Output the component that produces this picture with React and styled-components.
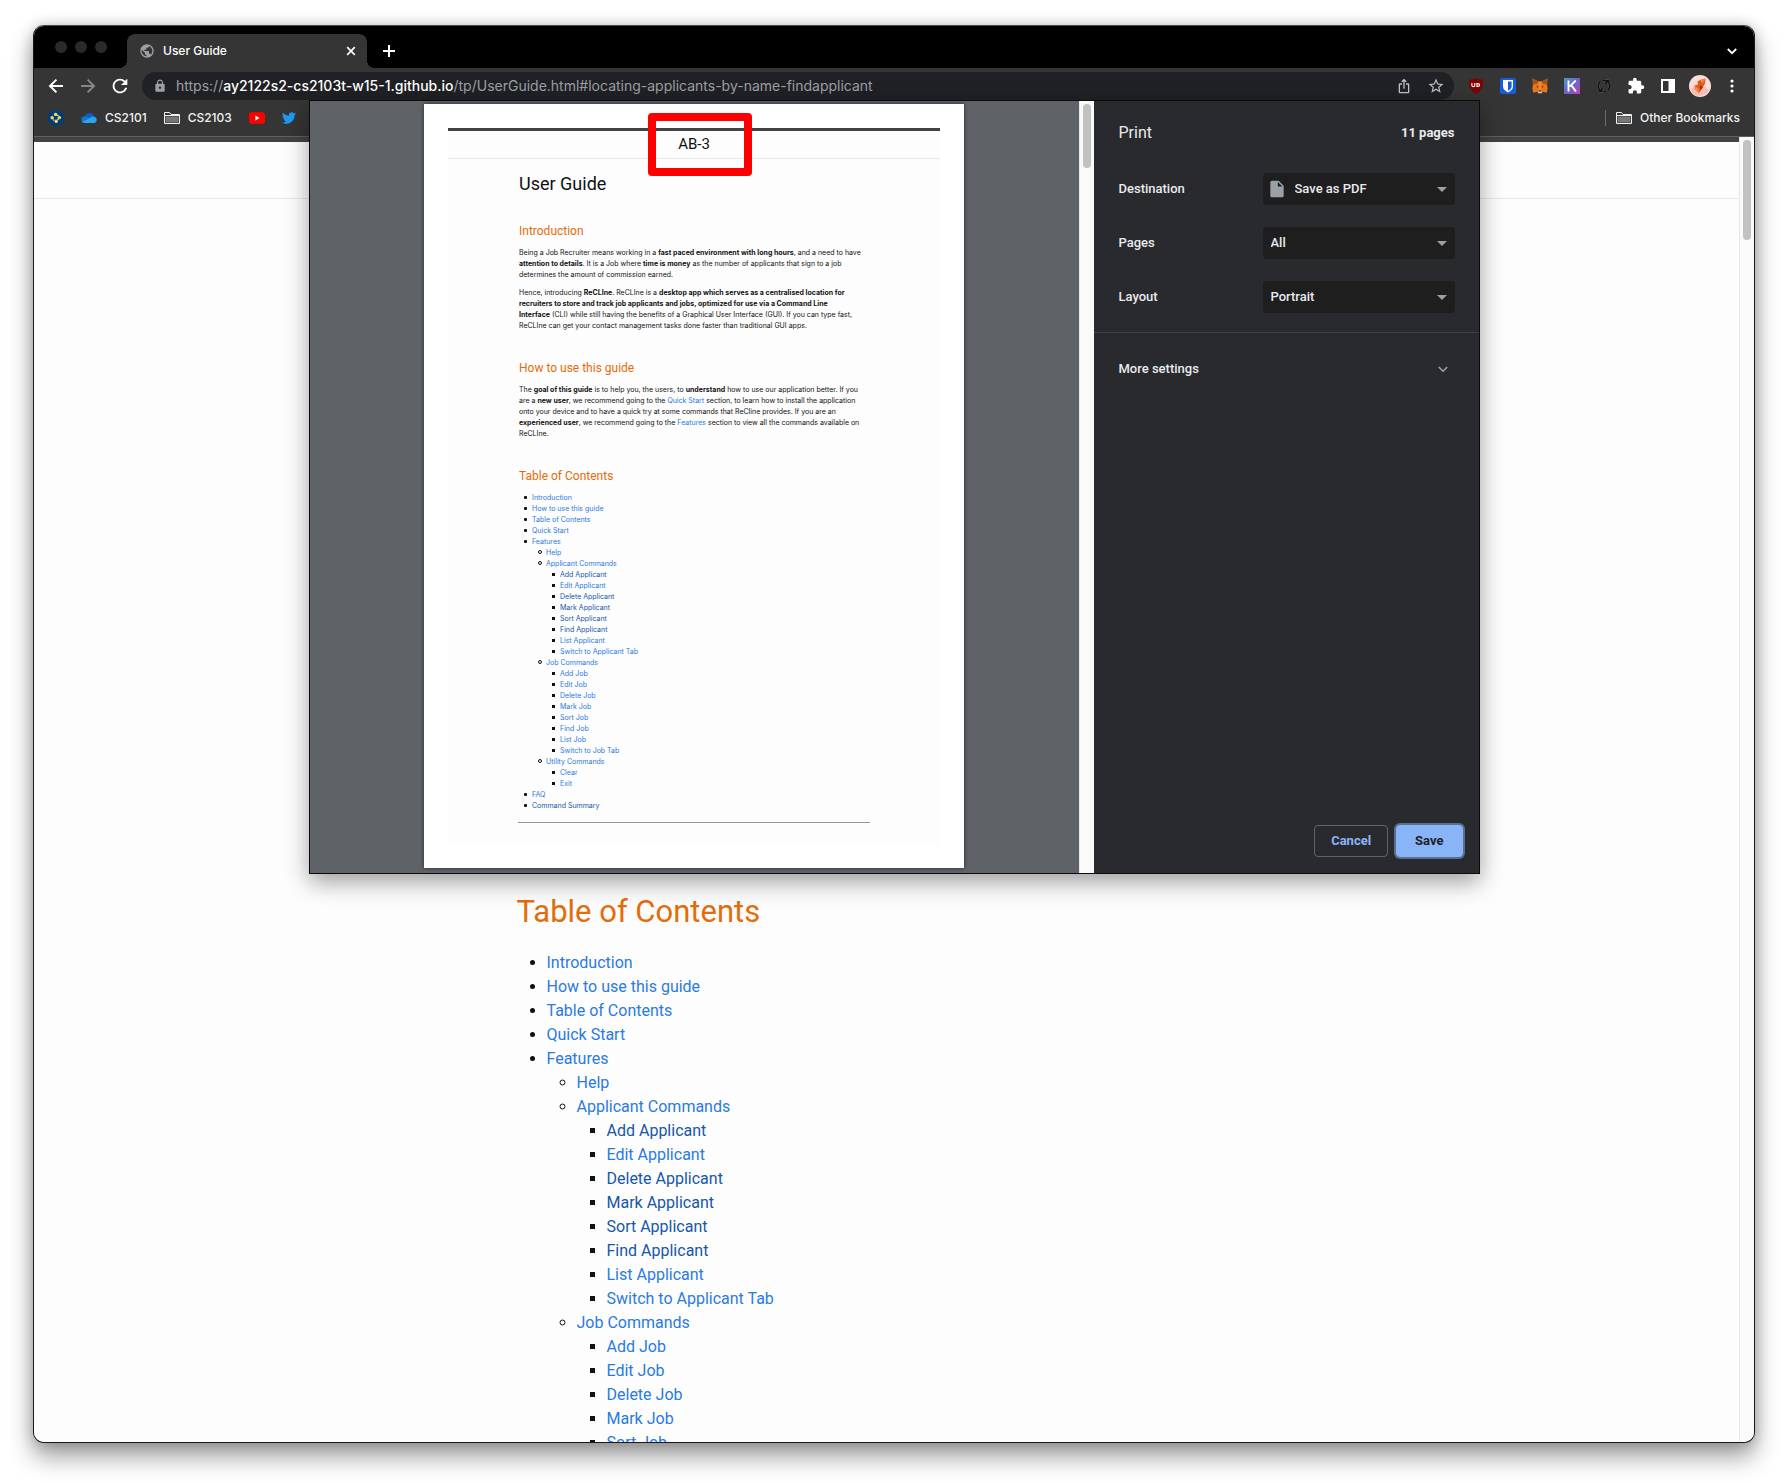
import React from "react";
import styled, { createGlobalStyle, css } from "styled-components";
import {
  MdExtension,
  MdInsertDriveFile,
  MdIosShare,
  MdLock,
  MdPublic,
  MdRefresh,
  MdStarOutline,
} from "react-icons/md";
import { FaTwitter } from "react-icons/fa";

const chromeFont = `Inter, Roboto, sans-serif`;
const uiFont = `Roboto, "Liberation Sans", sans-serif`;

const GlobalStyle = createGlobalStyle`
  *, *::before, *::after { box-sizing: border-box; }
  body { margin: 0; background: #fff; font-family: ${uiFont}; }
  svg { display: block; flex: none; }
  button { font: inherit; margin: 0; padding: 0; border: 0; background: none; cursor: pointer; }
  a { text-decoration: none; }
`;

/* ---------- Desktop and window ---------- */

const Desktop = styled.div`
  height: 100vh;
  padding: 25px 33px 40px;
  display: flex;
  overflow: hidden;
`;

const Window = styled.div`
  position: relative;
  flex: 1;
  min-width: 0;
  display: flex;
  flex-direction: column;
  border: 1px solid #18191b;
  border-top-color: #4a4a4a;
  border-radius: 11px;
  background: #fdfdfd;
  box-shadow: 0 14px 24px rgba(0, 0, 0, 0.38), 0 0 14px rgba(0, 0, 0, 0.2);
`;

const TabStrip = styled.div`
  display: flex;
  align-items: flex-end;
  height: 42px;
  padding: 0 17px 0 21px;
  background: #000;
  border-radius: 10px 10px 0 0;
  color: #fff;
`;

const Lights = styled.div`
  display: flex;
  align-items: center;
  gap: 8px;
  height: 42px;
  margin-right: 20px;
`;

const Light = styled.span`
  width: 12px;
  height: 12px;
  border-radius: 50%;
  background: #2a2a2a;
`;

const corner = css`
  content: "";
  position: absolute;
  bottom: 0;
  width: 8px;
  height: 8px;
`;

const Tab = styled.div`
  position: relative;
  display: flex;
  align-items: center;
  gap: 8px;
  width: 240px;
  height: 34px;
  padding: 0 11px 0 12px;
  border-radius: 8px 8px 0 0;
  background: #353535;
  font: 500 12px/16px ${chromeFont};
  &::before {
    ${corner}
    left: -8px;
    background: radial-gradient(circle at 0 0, transparent 8px, #353535 8px);
  }
  &::after {
    ${corner}
    right: -8px;
    background: radial-gradient(circle at 100% 0, transparent 8px, #353535 8px);
  }
`;

const TabTitle = styled.span`
  flex: 1;
`;

const IconButton = styled.button`
  display: flex;
  align-items: center;
  justify-content: center;
  width: ${(p) => p.$w || 32}px;
  height: ${(p) => p.$h || 28}px;
  color: ${(p) => p.$color || "#fff"};
`;

const NewTab = styled(IconButton)`
  margin-left: 12px;
  margin-right: auto;
`;

const Toolbar = styled.div`
  display: flex;
  align-items: center;
  height: 34px;
  padding: 2px 6px 0;
  background: #353535;
`;

const AddressBar = styled.div`
  flex: 1;
  min-width: 0;
  display: flex;
  align-items: center;
  height: 28px;
  margin: 0 6px;
  padding: 0 2px 0 11px;
  border-radius: 14px;
  background: #202124;
  color: #9aa0a6;
  font: 400 14px/20px ${chromeFont};
`;

const Url = styled.span`
  flex: 1;
  min-width: 0;
  margin-left: 9px;
  overflow: hidden;
  white-space: nowrap;
`;

const Host = styled.span`
  color: #fff;
  font-weight: 500;
`;

const BookmarkBar = styled.nav`
  display: flex;
  align-items: center;
  gap: 1px;
  height: 35px;
  padding: 0 14px 2px 6px;
  background: #353535;
  border-bottom: 1px solid #5f6060;
`;

const Bookmark = styled.a`
  display: flex;
  align-items: center;
  gap: 8px;
  padding: 0 8px;
  color: #f1f1f1;
  font: 500 12px/16px ${chromeFont};
`;

const OtherBookmarks = styled(Bookmark)`
  margin-left: auto;
  padding: 0 0 0 10px;
  border-left: 1px solid #6a6b6d;
`;

/* ---------- Web page ---------- */

const Viewport = styled.div`
  flex: 1;
  min-height: 0;
  display: flex;
  border-radius: 0 0 10px 10px;
  overflow: hidden;
`;

const Site = styled.div`
  flex: 1;
  min-width: 0;
  overflow: hidden;
  background: #fdfdfd;
  color: #111;
`;

const SiteHeader = styled.header`
  height: 62px;
  border-top: 5px solid #424242;
  border-bottom: 1px solid #e8e8e8;
`;

const SiteMain = styled.main`
  max-width: 800px;
  margin: 0 auto;
  padding: 689px 30px 0;
`;

const SiteHeading = styled.h2`
  margin: 0 0 15px;
  color: #e46c0a;
  font: 400 31px/48px ${uiFont};
`;

const SiteToc = styled.div`
  font: 400 16px/24px ${uiFont};
  ul {
    margin: 0;
    padding-left: 30px;
  }
`;

const TocLink = styled.a`
  color: ${(p) => (p.$visited ? "#1756a9" : "#2a7ae2")};
`;

const ScrollTrack = styled.div`
  flex: none;
  width: 15px;
  padding: 3px 3px 3px 4px;
  background: #fafafa;
  box-shadow: inset 1px 0 #e8e8e8;
`;

const ScrollThumb = styled.div`
  width: 8px;
  height: ${(p) => p.$length}px;
  border-radius: 4px;
  background: #c1c1c1;
`;

/* ---------- Print dialog ---------- */

const Dialog = styled.section`
  position: absolute;
  top: 74px;
  left: 0;
  right: 0;
  display: flex;
  max-width: 1171px;
  margin: 0 auto;
  border: 1px solid #0b0b0c;
  background: #292a2d;
  box-shadow: 0 8px 22px rgba(0, 0, 0, 0.38);
`;

const Preview = styled.div`
  flex: 1;
  display: flex;
  align-items: flex-start;
  justify-content: center;
  padding: 3px 0 5px;
  background: #5f6368;
`;

const Paper = styled.div`
  position: relative;
  width: 540px;
  padding: 24px 24px 23px;
  background: #fff;
  box-shadow: 0 0 4px rgba(0, 0, 0, 0.6);
`;

const Highlight = styled.div`
  position: absolute;
  top: 9px;
  left: 224px;
  width: 104px;
  height: 63px;
  border: 8px solid #f00;
  border-radius: 4px;
`;

const Sheet = styled.article`
  background: #fdfdfd;
  border-top: 3px solid #424242;
  color: #111;
`;

const SheetHeader = styled.header`
  border-bottom: 1px solid #e8e8e8;
  text-align: center;
  font: 400 15px/27px ${uiFont};
`;

const SheetBody = styled.div`
  max-width: 352px;
  margin: 0 auto;
  padding: 15px 0 22px;
  font: 400 7px/11px Inter, sans-serif;
  white-space: nowrap;
  p {
    margin: 0 0 7px 1px;
  }
  p + h2 {
    margin-top: 27px;
  }
  strong {
    font-weight: 700;
  }
  ul {
    margin: 0;
    padding-left: 14px;
    list-style: none;
  }
  li::before {
    content: "";
    display: inline-block;
    width: 3px;
    height: 3px;
    margin: 0 5px 0 -8px;
    vertical-align: 1px;
    border-radius: 1px;
    background: #111;
  }
  ul ul > li::before {
    width: 4px;
    height: 4px;
    margin-right: 4px;
    border: 1px solid #111;
    border-radius: 50%;
    background: none;
  }
  ul ul ul > li::before {
    width: 3px;
    height: 3px;
    margin-right: 5px;
    border-radius: 0;
    background: #111;
  }
`;

const SheetTitle = styled.h1`
  margin: 0 0 0 1px;
  font: 400 18px/20px ${uiFont};
`;

const SheetHeading = styled.h2`
  margin: 27px 0 6px 1px;
  color: #e46c0a;
  font: 400 12px/20px ${uiFont};
`;

const SheetRule = styled.hr`
  margin: 11px 0 0;
  border: 0;
  border-top: 1px solid #959595;
`;

const Sidebar = styled.form`
  flex: none;
  width: 385px;
  display: flex;
  flex-direction: column;
  color: #e8eaed;
  font: 500 13px/20px ${uiFont};
`;

const SidebarHeader = styled.div`
  display: flex;
  align-items: center;
  justify-content: space-between;
  padding: 20px 24px 17px 25px;
`;

const SidebarTitle = styled.h2`
  margin: 0;
  font: 400 16px/24px ${uiFont};
`;

const PageCount = styled.span`
  font-weight: 700;
`;

const Setting = styled.div`
  display: flex;
  align-items: center;
  justify-content: space-between;
  height: 54px;
  padding: 0 24px 0 25px;
`;

const SelectBox = styled.div`
  position: relative;
  width: 192px;
`;

const Select = styled.select`
  appearance: none;
  display: block;
  width: 100%;
  height: 32px;
  padding: 0 24px 0 ${(p) => (p.$icon ? 32 : 8)}px;
  border: 0;
  border-radius: 4px;
  background: #1e1e1f;
  color: #e8eaed;
  font: 500 13px/20px ${uiFont};
`;

const SelectArrow = styled.svg`
  position: absolute;
  right: 8px;
  top: 14px;
  pointer-events: none;
`;

const SelectIcon = styled.span`
  position: absolute;
  left: 4px;
  top: 6px;
  color: #9aa0a6;
  pointer-events: none;
`;

const MoreSettings = styled.button`
  display: flex;
  align-items: center;
  justify-content: space-between;
  margin-top: 8px;
  padding: 26px 31px 26px 25px;
  border-top: 1px solid #404144;
  color: inherit;
  svg {
    color: #9aa0a6;
  }
`;

const Actions = styled.div`
  display: flex;
  justify-content: flex-end;
  gap: 8px;
  margin-top: auto;
  padding: 16px;
`;

const Button = styled.button`
  height: 32px;
  padding: 0 ${(p) => (p.$primary ? 18 : 16)}px;
  border-radius: 4px;
  font-weight: 700;
  color: #8ab4f8;
  border: 1px solid #5f6368;
  ${(p) =>
    p.$primary &&
    css`
      color: #202124;
      background: #8ab4f8;
      border-color: #8ab4f8;
      box-shadow: 0 0 0 2px rgba(138, 180, 248, 0.5);
    `}
`;

/* ---------- Drawings ---------- */

const ArrowIcon = ({ flip }) => (
  <svg width="16" height="16" viewBox="0 0 16 16" fill="none" stroke="currentColor" strokeWidth="2"
    transform={flip ? "scale(-1 1)" : undefined}>
    <path d="M15 8H2.4M8.4 1.6 2 8l6.4 6.4" />
  </svg>
);

const CloseIcon = () => (
  <svg width="10" height="10" viewBox="0 0 10 10" stroke="currentColor" strokeWidth="1.7">
    <path d="M1.2 1.2l7.6 7.6M8.8 1.2L1.2 8.8" />
  </svg>
);

const PlusIcon = () => (
  <svg width="12" height="12" viewBox="0 0 12 12" stroke="currentColor" strokeWidth="2">
    <path d="M6 0v12M0 6h12" />
  </svg>
);

const Chevron = ({ weight = 1.8 }) => (
  <svg width="10" height="10" viewBox="0 0 10 10" fill="none" stroke="currentColor" strokeWidth={weight}>
    <path d="M.8 3 5 7.2 9.2 3" />
  </svg>
);

const FolderIcon = () => (
  <svg width="16" height="16" viewBox="0 0 16 16" fill="none" stroke="#f1f1f1" strokeWidth="1">
    <path d="M.5 13.5v-11h5l1.5 2h8.5v9z" />
    <path d="M2 6.5h12.5v6H1.5v-6z" fill="#777" stroke="none" />
    <path d="M.5 5.5h15" />
  </svg>
);

const CanvasIcon = () => (
  <svg width="16" height="16" viewBox="0 0 16 16">
    <circle cx="8" cy="8" r="8" fill="#003d7c" />
    <g fill="#f7dc5c">
      <circle cx="7.6" cy="4.4" r="1.7" />
      <circle cx="4.2" cy="7.8" r="1.7" />
      <circle cx="11.4" cy="7.6" r="1.7" />
      <circle cx="8.2" cy="11.3" r="1.7" />
      <circle cx="9.8" cy="5.4" r=".8" />
      <circle cx="5.6" cy="10" r=".8" />
      <circle cx="10" cy="9.4" r=".8" />
    </g>
  </svg>
);

const CloudIcon = () => (
  <svg width="16" height="16" viewBox="0 0 16 16">
    <path d="M4 6.4C4.8 4.2 6.5 3 8.5 3c2.3 0 4.2 1.5 4.8 3.6L8 10z" fill="#0a5fc0" />
    <path d="M3.3 13A3.3 3.3 0 0 1 4 6.4c1 0 1.8.3 2.5.7L12 11z" fill="#1374d6" />
    <path d="M13.2 6.7A3.2 3.2 0 0 1 13 13H8l-1-4 3-2c1-.5 2-.5 3.2-.3z" fill="#2a9df0" />
    <path d="M1 11.8 9 8.2l6.2 3.6A3 3 0 0 1 13 13H3.3A3.3 3.3 0 0 1 1 11.8z" fill="#28a8ea" />
  </svg>
);

const YoutubeIcon = () => (
  <svg width="16" height="16" viewBox="0 0 16 16">
    <rect y="2.3" width="16" height="11.4" rx="2.8" fill="#f00" />
    <path d="M6.4 5.6v4.8L10.5 8z" fill="#fff" />
  </svg>
);

const ShieldUDIcon = () => (
  <svg width="16" height="16" viewBox="0 0 16 16">
    <path d="M8 0c2 1.3 4.5 1.6 7 1.6 0 7.4-.6 10.2-7 14.4C1.6 11.8 1 9 1 1.6 3.500 1.6 6 1.3 8 0z" fill="#800000" />
    <path d="M3.9 5v2.400c0 1.600 2.900 1.600 2.900 0V5M8.900 5.600v2.800h.9c2.400 0 2.400-2.800 0-2.800z" fill="none" stroke="#fff" strokeWidth="1.100" />
  </svg>
);

const ShieldBlueIcon = () => (
  <svg width="16" height="16" viewBox="0 0 16 16">
    <rect width="16" height="16" rx="2.5" fill="#175ddc" />
    <path d="M3 2h10v6.5c0 2.8-2.4 4.6-5 6-2.6-1.4-5-3.2-5-6z" fill="#fff" />
    <path d="M8 3.5h3.6v5c0 1.8-1.6 3.2-3.6 4.3z" fill="#175ddc" />
  </svg>
);

const FoxIcon = () => (
  <svg width="16" height="16" viewBox="0 0 16 16">
    <path d="M.5.6 6.4 3.6h3.2L15.5.6 15 6.5l.6 4.3-1 4-3.6-1-1.5 1.5h-3L5 13.800l-3.600 1-1-4L1 6.500z" fill="#e8761b" />
    <path d="M.5.6 6.4 3.6 5 6 1 6.500zM15.500.600 9.600 3.600 11 6l4 .500z" fill="#a3541a" />
    <path d="M6.2 13h3.600l.2 1.600-.6.700H6.600l-.6-.7z" fill="#d5bfb2" />
    <path d="M6.4 3.6h3.200L9.200 8l.4 4.400H6.400L6.800 8z" fill="#f6851b" />
    <path d="M4.2 8.2l2.300.3-.6 1.200zM11.800 8.2l-2.300.3.6 1.200zM6.600 12.400h2.800l.2 1H6.400z" fill="#233447" />
  </svg>
);

const KIcon = () => (
  <svg width="16" height="16" viewBox="0 0 16 16">
    <defs>
      <linearGradient id="kFill" x1="0" y1="0" x2="1" y2="1">
        <stop offset="0" stopColor="#4a9fc8" />
        <stop offset=".5" stopColor="#6d62c8" />
        <stop offset="1" stopColor="#c03fb4" />
      </linearGradient>
    </defs>
    <rect width="16" height="16" fill="url(#kFill)" />
    <path d="M4.5 2.5v11M11.8 2.5 5.6 8.6M7.2 7.2l4.8 6.3" fill="none" stroke="#fff" strokeWidth="1.9" />
  </svg>
);

const syncArcs = "M5.200 13.200A6 6 0 0 1 4.200 3.400M6.600 2.400A6 6 0 0 1 13.600 6.200M13.800 9A6 6 0 0 1 12 12.400M10.800 2.800A6 6 0 0 1 12 12.400M10 13.600A6 6 0 0 1 7.800 14";
const syncHeads = "M2.600 13.200h3.200v-3.200M13.400 2.800h-3.200V6";

const SyncIcon = () => (
  <svg width="16" height="16" viewBox="0 0 16 16" fill="none">
    <path d={syncArcs} stroke="#5a5a5a" strokeWidth="2.4" />
    <path d={syncHeads} stroke="#5a5a5a" strokeWidth="2.4" />
    <path d={syncArcs} stroke="#111" strokeWidth="1.6" />
    <path d={syncHeads} stroke="#111" strokeWidth="1.6" />
  </svg>
);

const PanelIcon = () => (
  <svg width="14" height="14" viewBox="0 0 14 14">
    <path d="M0 0h14v14H0zM2 2v10h5.5V2z" fill="#fff" fillRule="evenodd" />
  </svg>
);

const AvatarIcon = () => (
  <svg width="22" height="22" viewBox="0 0 22 22">
    <circle cx="11" cy="11" r="11" fill="#fbdcd8" />
    <path d="M2 14l5-3 9 1 4 3a11 11 0 0 1-16 4z" fill="#f6bdb6" />
    <path d="M8.500 6.500 11 5l5.500-1.500-.5 5-2.500 4.500L10 18l-4-3.500-.5-4 3.500-1z" fill="#e4571b" />
    <path d="M11 5l5.500-1.500-3 5zM5.500 10.500l4 3L10 18l-4-3.500z" fill="#f58a3c" />
    <path d="M11 10l2.500 2.500L11.500 15z" fill="#7c2a12" />
  </svg>
);

const KebabIcon = () => (
  <svg width="4" height="16" viewBox="0 0 4 16" fill="currentColor">
    <circle cx="2" cy="3" r="1.6" />
    <circle cx="2" cy="8" r="1.6" />
    <circle cx="2" cy="13" r="1.6" />
  </svg>
);

/* ---------- Content ---------- */

const applicantCommands = [
  ["Add Applicant", true],
  ["Edit Applicant"],
  ["Delete Applicant", true],
  ["Mark Applicant", true],
  ["Sort Applicant", true],
  ["Find Applicant", true],
  ["List Applicant"],
  ["Switch to Applicant Tab"],
];

const jobCommands = [
  ["Add Job"],
  ["Edit Job"],
  ["Delete Job"],
  ["Mark Job"],
  ["Sort Job"],
  ["Find Job"],
  ["List Job"],
  ["Switch to Job Tab"],
];

const opening = [
  ["Introduction"],
  ["How to use this guide"],
  ["Table of Contents"],
  ["Quick Start"],
];

const fullToc = [
  ...opening,
  ["Features", false, [
    ["Help"],
    ["Applicant Commands", false, applicantCommands],
    ["Job Commands", false, jobCommands],
    ["Utility Commands", false, [["Clear"], ["Exit"]]],
  ]],
  ["FAQ"],
  ["Command Summary", true],
];

const visibleToc = [
  ...opening,
  ["Features", false, [
    ["Help"],
    ["Applicant Commands", false, applicantCommands],
    ["Job Commands", false, jobCommands.slice(0, 5)],
  ]],
];

const slug = (text) => "#" + text.toLowerCase().replace(/ /g, "-");

const TocList = ({ items }) => (
  <ul>
    {items.map(([label, visited, children]) => (
      <li key={label}>
        <TocLink href={slug(label)} $visited={visited}>{label}</TocLink>
        {children && <TocList items={children} />}
      </li>
    ))}
  </ul>
);

const GuideSheet = () => (
  <Sheet>
    <SheetHeader>AB-3</SheetHeader>
    <SheetBody>
      <SheetTitle>User Guide</SheetTitle>
      <SheetHeading>Introduction</SheetHeading>
      <p>
        Being a Job Recruiter means working in a <strong>fast paced environment with long hours</strong>, and a need to have<br />
        <strong>attention to details</strong>. It is a Job where <strong>time is money</strong> as the number of applicants that sign to a job<br />
        determines the amount of commission earned.
      </p>
      <p>
        Hence, introducing <strong>ReCLIne</strong>. ReCLIne is a <strong>desktop app which serves as a centralised location for<br />
        recruiters to store and track job applicants and jobs, optimized for use via a Command Line<br />
        Interface</strong> (CLI) while still having the benefits of a Graphical User Interface (GUI). If you can type fast,<br />
        ReCLIne can get your contact management tasks done faster than traditional GUI apps.
      </p>
      <SheetHeading>How to use this guide</SheetHeading>
      <p>
        The <strong>goal of this guide</strong> is to help you, the users, to <strong>understand</strong> how to use our application better. If you<br />
        are a <strong>new user</strong>, we recommend going to the <TocLink href="#quick-start">Quick Start</TocLink> section, to learn how to install the application<br />
        onto your device and to have a quick try at some commands that ReCline provides. If you are an<br />
        <strong>experienced user</strong>, we recommend going to the <TocLink href="#features">Features</TocLink> section to view all the commands available on<br />
        ReCLIne.
      </p>
      <SheetHeading>Table of Contents</SheetHeading>
      <TocList items={fullToc} />
      <SheetRule />
    </SheetBody>
  </Sheet>
);

const SelectSetting = ({ id, label, value, icon }) => (
  <Setting>
    <label htmlFor={id}>{label}</label>
    <SelectBox>
      {icon && <SelectIcon>{icon}</SelectIcon>}
      <Select id={id} defaultValue={value} $icon={!!icon}>
        <option>{value}</option>
      </Select>
      <SelectArrow width="10" height="5" viewBox="0 0 10 5">
        <path d="M0 0h10L5 5z" fill="#9aa0a6" />
      </SelectArrow>
    </SelectBox>
  </Setting>
);

const PrintDialog = () => (
  <Dialog role="dialog">
    <Preview>
      <Paper>
        <GuideSheet />
        <Highlight />
      </Paper>
    </Preview>
    <ScrollTrack>
      <ScrollThumb $length={64} />
    </ScrollTrack>
    <Sidebar onSubmit={(e) => e.preventDefault()}>
      <SidebarHeader>
        <SidebarTitle>Print</SidebarTitle>
        <PageCount>11 pages</PageCount>
      </SidebarHeader>
      <SelectSetting id="destination" label="Destination" value="Save as PDF" icon={<MdInsertDriveFile size={20} />} />
      <SelectSetting id="pages" label="Pages" value="All" />
      <SelectSetting id="layout" label="Layout" value="Portrait" />
      <MoreSettings type="button">
        More settings
        <Chevron weight={1.6} />
      </MoreSettings>
      <Actions>
        <Button type="button">Cancel</Button>
        <Button $primary>Save</Button>
      </Actions>
    </Sidebar>
  </Dialog>
);

const extensions = [ShieldUDIcon, ShieldBlueIcon, FoxIcon, KIcon, SyncIcon];

export default function App() {
  return (
    <Desktop>
      <GlobalStyle />
      <Window>
        <TabStrip>
          <Lights>
            <Light />
            <Light />
            <Light />
          </Lights>
          <Tab>
            <MdPublic size={16} color="#9aa0a6" />
            <TabTitle>User Guide</TabTitle>
            <IconButton $w={10} $h={16}><CloseIcon /></IconButton>
          </Tab>
          <NewTab $w={20} $h={34}><PlusIcon /></NewTab>
          <IconButton $w={10} $h={34}><Chevron /></IconButton>
        </TabStrip>
        <Toolbar>
          <IconButton><ArrowIcon /></IconButton>
          <IconButton $color="#868686"><ArrowIcon flip /></IconButton>
          <IconButton><MdRefresh size={22} /></IconButton>
          <AddressBar>
            <MdLock size={14} />
            <Url>
              https://<Host>ay2122s2-cs2103t-w15-1.github.io</Host>/tp/UserGuide.html#locating-applicants-by-name-findapplicant
            </Url>
            <IconButton $color="#bdc1c6"><MdIosShare size={16} /></IconButton>
            <IconButton $color="#bdc1c6"><MdStarOutline size={18} /></IconButton>
          </AddressBar>
          {extensions.map((Icon, i) => (
            <IconButton key={i}><Icon /></IconButton>
          ))}
          <IconButton><MdExtension size={18} /></IconButton>
          <IconButton><PanelIcon /></IconButton>
          <IconButton><AvatarIcon /></IconButton>
          <IconButton><KebabIcon /></IconButton>
        </Toolbar>
        <BookmarkBar>
          <Bookmark href="#canvas"><CanvasIcon /></Bookmark>
          <Bookmark href="#cs2101"><CloudIcon />CS2101</Bookmark>
          <Bookmark href="#cs2103"><FolderIcon />CS2103</Bookmark>
          <Bookmark href="#youtube"><YoutubeIcon /></Bookmark>
          <Bookmark href="#twitter"><FaTwitter size={14} color="#1d9bf0" /></Bookmark>
          <OtherBookmarks href="#other"><FolderIcon />Other Bookmarks</OtherBookmarks>
        </BookmarkBar>
        <Viewport>
          <Site>
            <SiteHeader />
            <SiteMain>
              <SiteHeading>Table of Contents</SiteHeading>
              <SiteToc>
                <TocList items={visibleToc} />
              </SiteToc>
            </SiteMain>
          </Site>
          <ScrollTrack>
            <ScrollThumb $length={100} />
          </ScrollTrack>
        </Viewport>
        <PrintDialog />
      </Window>
    </Desktop>
  );
}
